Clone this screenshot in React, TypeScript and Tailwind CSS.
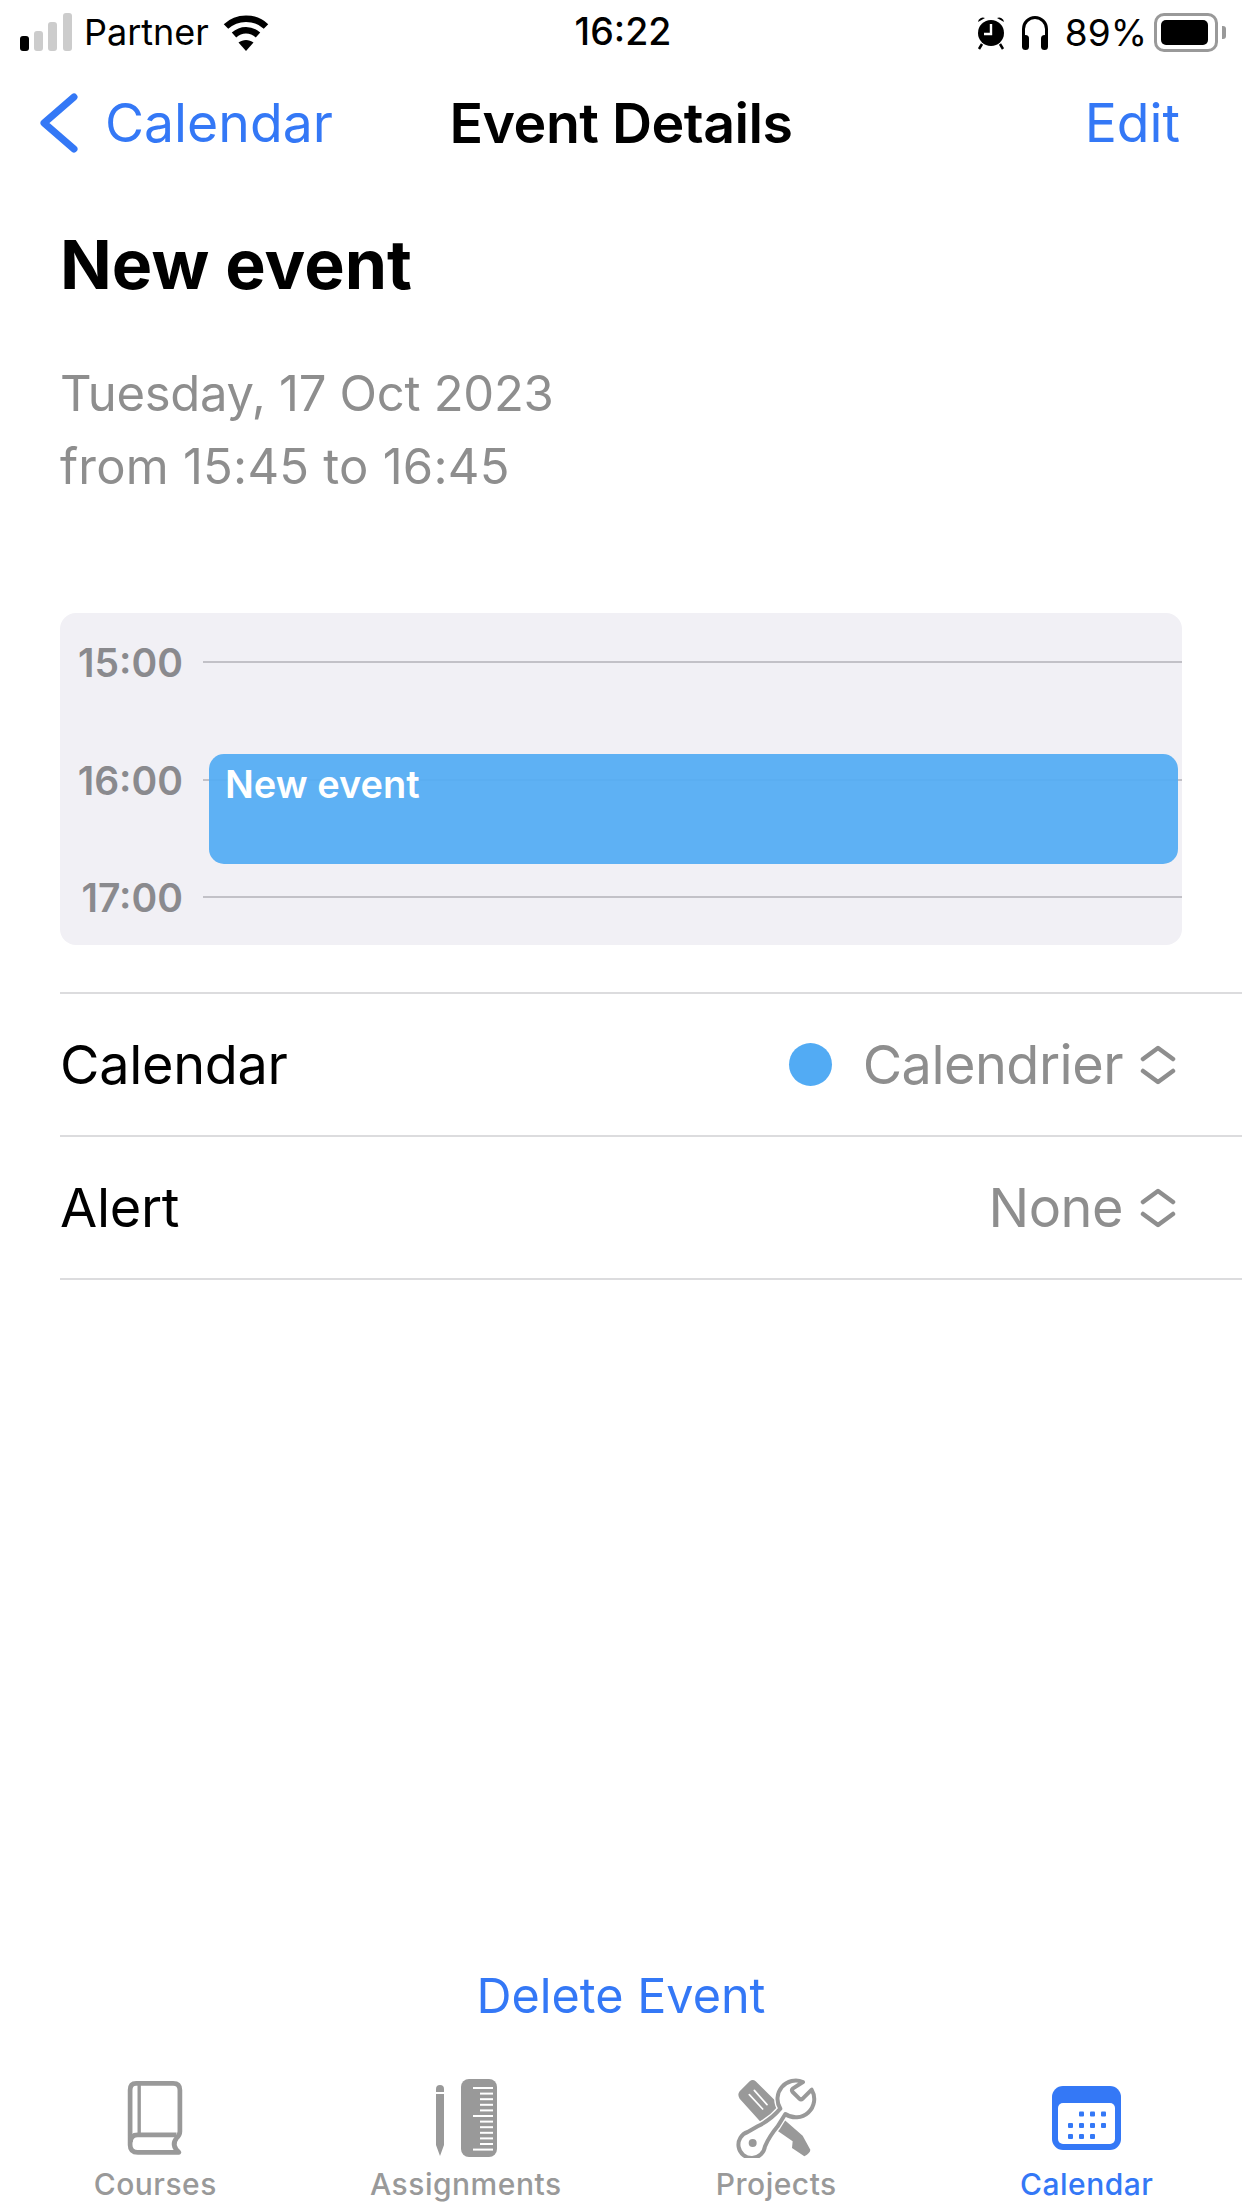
import { ReactNode } from 'react';

function SignalBars() {
  return (
    <svg width="52" height="38" viewBox="0 0 52 38" fill="#cccccc">
      <rect x="0" y="23" width="9" height="15" rx="3" fill="#000" />
      <rect x="14" y="18" width="9" height="20" rx="3" />
      <rect x="28" y="9" width="9" height="29" rx="3" />
      <rect x="43" y="0" width="9" height="38" rx="3" />
    </svg>
  );
}

function Wifi() {
  return (
    <svg width="46" height="39" viewBox="0 0 46 39" fill="none" stroke="#000" strokeWidth="6.5">
      <path d="M3 13.5C14 3 32 3 43 13.5" />
      <path d="M11 22C18 15.5 28 15.5 35 22" />
      <path d="M23 38L15.5 29.5C20 26 26 26 30.5 29.5Z" fill="#000" stroke="none" />
    </svg>
  );
}

function Alarm() {
  return (
    <svg width="28" height="35" viewBox="0 0 28 35">
      <circle cx="14" cy="18" r="13" fill="#000" />
      <path d="M1 7a5 5 0 0 1 7-4zM27 7a5 5 0 0 0-7-4z" fill="#000" />
      <path d="M5 29l-3 5M23 29l3 5" stroke="#000" strokeWidth="2.5" />
      <path d="M14 9v10H7" stroke="#fff" strokeWidth="2.4" fill="none" />
    </svg>
  );
}

function Headphones() {
  return (
    <svg width="28" height="35" viewBox="0 0 28 35" fill="none">
      <path d="M2.5 24V14a11.5 11.5 0 0 1 23 0v10" stroke="#000" strokeWidth="3" />
      <rect x="1" y="20" width="7" height="15" rx="3.5" fill="#000" />
      <rect x="20" y="20" width="7" height="15" rx="3.5" fill="#000" />
    </svg>
  );
}

function Battery() {
  return (
    <div className="flex items-center gap-[4px]">
      <div className="w-[64px] h-[39px] rounded-[10px] border-[3px] border-[#999999] p-[4px]">
        <div className="h-full w-[47px] rounded-[5px] bg-black" />
      </div>
      <div className="w-[4px] h-[13px] rounded-r-[3px] bg-[#999999]" />
    </div>
  );
}

function UpDown() {
  return (
    <svg width="36" height="40" viewBox="0 0 36 40" fill="none" stroke="#8e8e8e" strokeWidth="4.5" strokeLinecap="round" strokeLinejoin="round">
      <path d="M3 14L18 3L33 14" />
      <path d="M3 26L18 37L33 26" />
    </svg>
  );
}

function BookIcon() {
  return (
    <svg width="60" height="74" viewBox="0 0 162 220" fill="none" stroke="#999999" strokeWidth="14" strokeLinejoin="round">
      <path d="M25 7H135Q155 7 155 27V150Q155 160 145 170Q128 190 152 212H30Q7 212 7 190V27Q7 7 25 7Z" />
      <path d="M34 8V160" strokeWidth="10" />
      <path d="M8 182Q8 160 30 160H145" />
    </svg>
  );
}

function RulerIcon() {
  const ticks = [0, 1, 2, 3, 4, 5, 6, 7, 8, 9, 10, 11];
  return (
    <svg width="62" height="78" viewBox="0 0 62 78">
      <path d="M1 10a4 4 0 0 1 8 0v3H1zM1 15h8v51l-4 11-4-11z" fill="#999999" />
      <rect x="26" y="0" width="36" height="78" rx="8" fill="#999999" />
      {ticks.map((t) => (
        <rect key={t} x={t === 0 || t === 5 || t === 11 ? 38 : 45} y={8 + t * 5.6} width={t === 0 || t === 5 || t === 11 ? 20 : 13} height="2" fill="#fff" />
      ))}
    </svg>
  );
}

const WRENCH =
  'M196 12A55 55 0 0 0 128 92Q100 125 60 145L30 162A40 40 0 1 0 82 205Q95 175 120 145L143 108A55 55 0 0 0 222 35L195 62Q190 66 185 62L165 42Q160 37 165 32Z';

function ToolsIcon() {
  return (
    <svg width="82" height="80" viewBox="0 0 230 240">
      <path d="M36 10Q45 2 54 10L125 80L140 125L195 173L218 215Q218 225 200 235L163 210L165 190L115 155L67 130L6 62Q-2 50 6 40Z" fill="#999999" />
      <path d="M35 50L75 93M50 37L88 80" stroke="#fff" strokeWidth="5" strokeLinecap="round" />
      <path d={WRENCH} fill="#fff" stroke="#fff" strokeWidth="20" strokeLinejoin="round" />
      <path d={WRENCH} fill="#fff" stroke="#999999" strokeWidth="12" strokeLinejoin="round" />
      <circle cx="45" cy="195" r="12" fill="#999999" />
    </svg>
  );
}

function CalendarIcon() {
  const dots = [
    [26, 8.5], [37, 8.5], [48, 8.5],
    [15, 20], [26, 20], [37, 20], [48, 20],
    [15, 31], [26, 31], [37, 31],
  ];
  return (
    <svg width="69" height="64" viewBox="0 0 69 64">
      <rect width="69" height="64" rx="11" fill="#3478f6" />
      <rect x="6" y="17" width="57" height="41" rx="5" fill="#fff" />
      {dots.map(([x, y]) => (
        <rect key={`${x}-${y}`} x={x + 1} y={y + 17} width="5" height="5" rx="1" fill="#3478f6" />
      ))}
    </svg>
  );
}

function HourRow({ time, className }: { time: string; className: string }) {
  return (
    <div className={`flex items-center ${className}`}>
      <span className="w-[143px] pr-[20px] text-right text-[39px] leading-none font-semibold text-[#8a8a8e]">{time}</span>
      <div className="flex-1 h-[2px] bg-[#c2c1c7]" />
    </div>
  );
}

function DetailRow({ label, children }: { label: string; children: ReactNode }) {
  return (
    <div className="h-[143px] flex items-center justify-between pr-[66px] border-b-2 border-[#dcdcde]">
      <span className="text-[54px] text-black tracking-[-0.3px]">{label}</span>
      <div className="flex items-center">
        {children}
        <div className="ml-[17px]">
          <UpDown />
        </div>
      </div>
    </div>
  );
}

function Tab({ label, active, children }: { label: string; active?: boolean; children: ReactNode }) {
  return (
    <div className="flex flex-col items-center">
      <div className="h-[82px] flex items-center">{children}</div>
      <span className={`mt-[7px] text-[30px] leading-[36px] font-medium tracking-[0.5px] ${active ? 'text-[#3478f6]' : 'text-[#999999]'}`}>{label}</span>
    </div>
  );
}

export default function App() {
  return (
    <div className="w-[1242px] h-[2208px] bg-white flex flex-col overflow-hidden font-[family-name:Inter,sans-serif]">
      {/* status bar */}
      <div className="h-[64px] pl-[20px] pr-[16px] flex items-center justify-between text-black">
        <div className="flex-1 flex items-center">
          <SignalBars />
          <span className="ml-[12px] text-[36px] leading-none">Partner</span>
          <div className="ml-[14px]">
            <Wifi />
          </div>
        </div>
        <span className="text-[37.5px] leading-none font-medium">16:22</span>
        <div className="flex-1 flex items-center justify-end">
          <Alarm />
          <div className="ml-[16px]">
            <Headphones />
          </div>
          <span className="ml-[16px] mr-[7px] text-[37px] leading-none">89%</span>
          <Battery />
        </div>
      </div>

      {/* nav bar */}
      <div className="h-[118px] px-[40px] flex items-center justify-between text-[53.5px] text-[#3478f6]">
        <div className="flex-1 flex items-center">
          <svg width="38" height="60" viewBox="0 0 38 60" fill="none" stroke="#3478f6" strokeWidth="7" strokeLinecap="round" strokeLinejoin="round">
            <path d="M34 4L4 30L34 56" />
          </svg>
          <span className="ml-[27px]">Calendar</span>
        </div>
        <span className="text-[55.5px] font-semibold text-black tracking-[-0.5px]">Event Details</span>
        <div className="flex-1 text-right">
          <span className="mr-[22px]">Edit</span>
        </div>
      </div>

      {/* event */}
      <div className="pl-[60px] flex-1 flex flex-col">
        <h1 className="mt-[37px] text-[68px] leading-[90px] font-bold text-black">New event</h1>
        <div className="mt-[48px] text-[49px] leading-[73px] text-[#8e8e8e]">
          <div className="tracking-[-0.28px]">Tuesday, 17 Oct 2023</div>
          <div className="tracking-[0.22px]">from 15:45 to 16:45</div>
        </div>

        <div className="mt-[110px] w-[1122px] h-[332px] mr-[60px] rounded-[16px] bg-[#f1f0f5] relative pt-[29px]">
          <HourRow time="15:00" className="h-[40px]" />
          <HourRow time="16:00" className="h-[40px] mt-[78px]" />
          <HourRow time="17:00" className="h-[40px] mt-[77px]" />
          <div className="absolute left-[149px] top-[141px] w-[969px] h-[110px] rounded-[15px] bg-[#55adf3]/95 pl-[16px] pt-[8px] text-[38px] leading-[44px] font-semibold text-white">
            New event
          </div>
        </div>

        <div className="mt-[47px] border-t-2 border-[#dcdcde]">
          <DetailRow label="Calendar">
            <div className="w-[43px] h-[43px] rounded-full bg-[#52abf4] mr-[31px]" />
            <span className="text-[54px] text-[#8e8e8e] tracking-[-0.5px]">Calendrier</span>
          </DetailRow>
          <DetailRow label="Alert">
            <span className="text-[54px] text-[#8e8e8e] tracking-[-0.5px]">None</span>
          </DetailRow>
        </div>
      </div>

      {/* delete */}
      <div className="h-[70px] flex items-center justify-center text-[48.5px] text-[#3478f6]">Delete Event</div>

      {/* tab bar */}
      <div className="mt-[46px] h-[131px] grid grid-cols-4">
        <Tab label="Courses">
          <BookIcon />
        </Tab>
        <Tab label="Assignments">
          <RulerIcon />
        </Tab>
        <Tab label="Projects">
          <ToolsIcon />
        </Tab>
        <Tab label="Calendar" active>
          <CalendarIcon />
        </Tab>
      </div>
    </div>
  );
}
